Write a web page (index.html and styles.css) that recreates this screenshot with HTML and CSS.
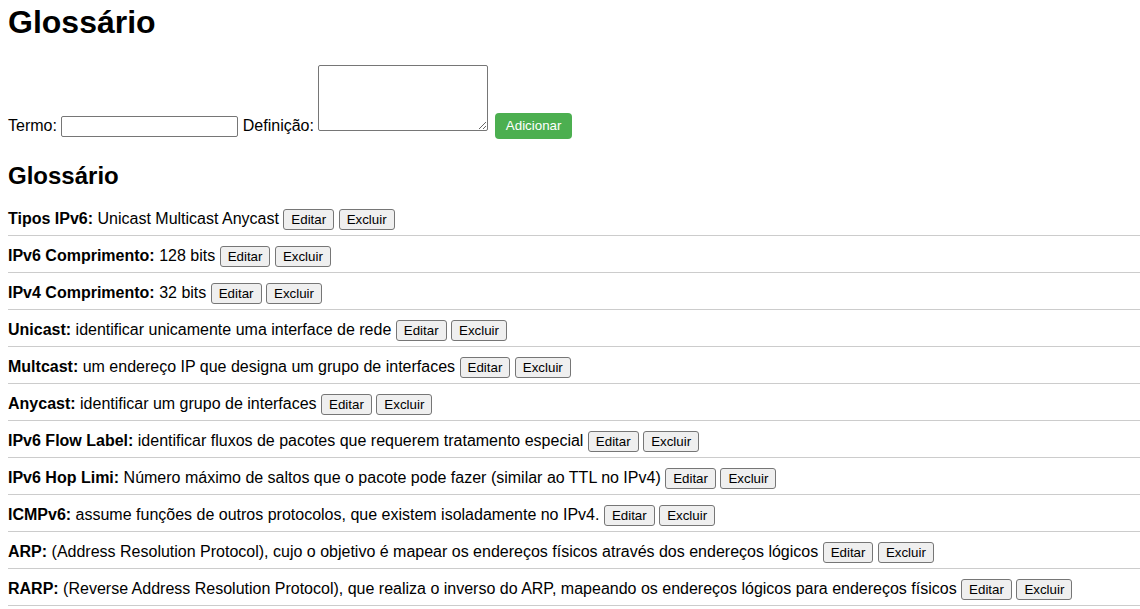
FILE: index.html
```html
<!DOCTYPE html>
<html lang="pt">
<head>
<meta charset="utf-8">
<title>Glossário</title>
<link rel="stylesheet" href="styles.css">
</head>
<body>
<h1 class="title">Glossário</h1>
<form class="add-form">
  <label class="lbl">Termo: <input class="term-input" type="text"></label>
  <label class="lbl">Definição: <textarea class="def-input"></textarea></label>
  <button class="btn-add" type="button">Adicionar</button>
</form>
<h2 class="subtitle">Glossário</h2>
<ul class="gloss-list">
  <li class="gloss-item"><strong>Tipos IPv6:</strong> Unicast Multicast Anycast <button class="btn">Editar</button> <button class="btn">Excluir</button></li>
  <li class="gloss-item"><strong>IPv6 Comprimento:</strong> 128 bits <button class="btn">Editar</button> <button class="btn">Excluir</button></li>
  <li class="gloss-item"><strong>IPv4 Comprimento:</strong> 32 bits <button class="btn">Editar</button> <button class="btn">Excluir</button></li>
  <li class="gloss-item"><strong>Unicast:</strong> identificar unicamente uma interface de rede <button class="btn">Editar</button> <button class="btn">Excluir</button></li>
  <li class="gloss-item"><strong>Multcast:</strong> um endereço IP que designa um grupo de interfaces <button class="btn">Editar</button> <button class="btn">Excluir</button></li>
  <li class="gloss-item"><strong>Anycast:</strong> identificar um grupo de interfaces <button class="btn">Editar</button> <button class="btn">Excluir</button></li>
  <li class="gloss-item"><strong>IPv6 Flow Label:</strong> identificar fluxos de pacotes que requerem tratamento especial <button class="btn">Editar</button> <button class="btn">Excluir</button></li>
  <li class="gloss-item"><strong>IPv6 Hop Limi:</strong> Número máximo de saltos que o pacote pode fazer (similar ao TTL no IPv4) <button class="btn">Editar</button> <button class="btn">Excluir</button></li>
  <li class="gloss-item"><strong>ICMPv6:</strong> assume funções de outros protocolos, que existem isoladamente no IPv4. <button class="btn">Editar</button> <button class="btn">Excluir</button></li>
  <li class="gloss-item"><strong>ARP:</strong> (Address Resolution Protocol), cujo o objetivo é mapear os endereços físicos através dos endereços lógicos <button class="btn">Editar</button> <button class="btn">Excluir</button></li>
  <li class="gloss-item"><strong>RARP:</strong> (Reverse Address Resolution Protocol), que realiza o inverso do ARP, mapeando os endereços lógicos para endereços físicos <button class="btn">Editar</button> <button class="btn">Excluir</button></li>
</ul>
</body>
</html>
```

FILE: styles.css
```css
html, body {
  background: #fff;
}
body {
  margin: 0;
  padding: 4px 0 0 8px;
  font-family: "Liberation Sans", Arial, sans-serif;
  font-size: 16px;
  color: #000;
}
.title {
  font-size: 32px;
  font-weight: bold;
  margin: 0 0 24px;
}
.add-form {
  margin: 0;
}
.lbl {
  color: #000;
}
.term-input {
  box-sizing: border-box;
  width: 177px;
  height: 21px;
  padding: 1px 2px;
  border: 1px solid #767676;
  border-radius: 2px;
  font-family: "Liberation Sans", Arial, sans-serif;
  font-size: 13.33px;
}
.def-input {
  box-sizing: border-box;
  width: 170px;
  height: 66px;
  padding: 2px;
  border: 1px solid #767676;
  border-radius: 2px;
  font-family: "Liberation Mono", monospace;
  font-size: 13.33px;
  vertical-align: baseline;
}
.btn-add {
  background: #4caf50;
  color: #fff;
  border: none;
  border-radius: 4px;
  padding: 5px 11px 6px;
  font-family: "Liberation Sans", Arial, sans-serif;
  font-size: 13.33px;
  margin-left: 2px;
  position: relative;
  top: -1px;
}
.subtitle {
  font-size: 24px;
  font-weight: bold;
  margin: 22px 0 9px;
}
.gloss-list {
  list-style: none;
  margin: 0;
  padding: 0;
}
.gloss-item {
  padding: 10px 0 5px;
  border-bottom: 1px solid #ccc;
}
.btn {
  font-family: "Liberation Sans", Arial, sans-serif;
  font-size: 13.33px;
  background: #efefef;
  color: #000;
  border: 1px solid #767676;
  border-radius: 3px;
  padding: 2px 7px;
}
```
